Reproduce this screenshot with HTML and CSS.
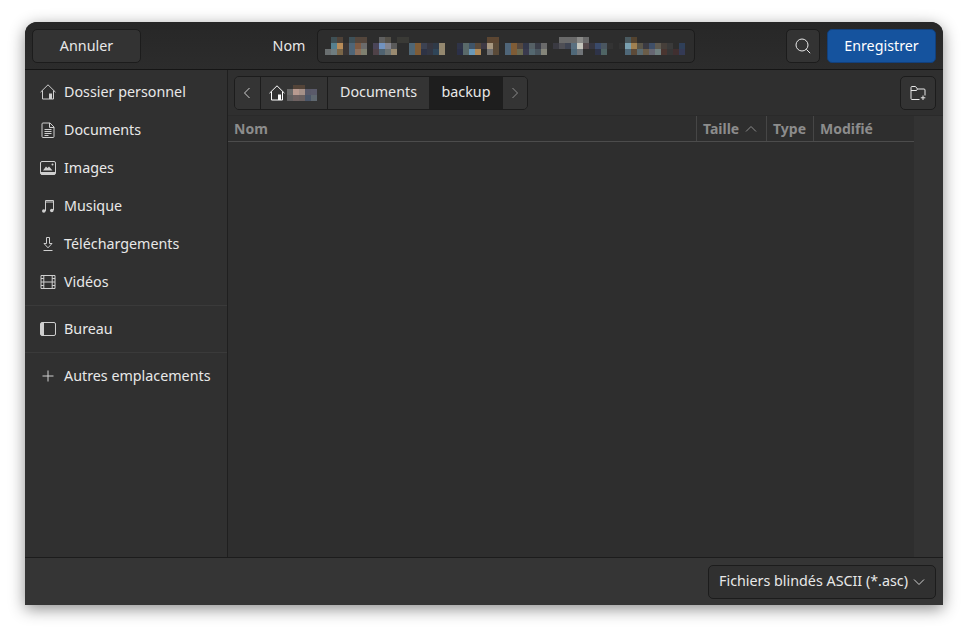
FILE: index.html
```html
<!DOCTYPE html>
<html>
<head>
    <title>Enregistrer</title>
    <link rel="stylesheet" href="styles.css">
</head>
<body>
    <section class="window">
        <header class="topbar">
            <div class="topbar-left">
                <button class="btn btn-cancel"><span class="lift-small">Annuler</span></button>
            </div>
            <div class="name-group">
                <label class="name-label lift-small">Nom</label>
                <div class="name-entry">
                    <svg class="mosaic" width="360" height="18" viewBox="324 36 360 18" shape-rendering="crispEdges">
                        <rect x="324" y="48" width="6" height="6" fill="#6a6f70"/>
                        <rect x="330" y="36" width="6" height="6" fill="#3f5055"/>
                        <rect x="330" y="42" width="6" height="6" fill="#56808f"/>
                        <rect x="330" y="48" width="6" height="6" fill="#6f7d80"/>
                        <rect x="336" y="36" width="6" height="6" fill="#4f4238"/>
                        <rect x="336" y="42" width="6" height="6" fill="#b98c58"/>
                        <rect x="336" y="48" width="6" height="6" fill="#7a6648"/>
                        <rect x="342" y="42" width="6" height="12" fill="#3a3535"/>
                        <rect x="348" y="36" width="6" height="6" fill="#3e5058"/>
                        <rect x="348" y="42" width="6" height="12" fill="#4f6577"/>
                        <rect x="354" y="36" width="6" height="6" fill="#54463c"/>
                        <rect x="354" y="42" width="6" height="6" fill="#7f5a42"/>
                        <rect x="354" y="48" width="6" height="6" fill="#8c6f5c"/>
                        <rect x="360" y="36" width="6" height="6" fill="#54463c"/>
                        <rect x="360" y="42" width="6" height="6" fill="#6b6b6b"/>
                        <rect x="360" y="48" width="6" height="6" fill="#7f8070"/>
                        <rect x="372" y="42" width="6" height="6" fill="#4a4558"/>
                        <rect x="372" y="48" width="6" height="6" fill="#4f4248"/>
                        <rect x="378" y="36" width="6" height="6" fill="#5f5f5f"/>
                        <rect x="378" y="42" width="6" height="6" fill="#7293c0"/>
                        <rect x="378" y="48" width="6" height="6" fill="#4f6270"/>
                        <rect x="384" y="36" width="6" height="6" fill="#545048"/>
                        <rect x="384" y="42" width="6" height="6" fill="#85858f"/>
                        <rect x="384" y="48" width="6" height="6" fill="#6c7272"/>
                        <rect x="390" y="42" width="6" height="6" fill="#5a5a5a"/>
                        <rect x="390" y="48" width="6" height="6" fill="#9a8a70"/>
                        <rect x="396" y="36" width="12" height="6" fill="#3a3a36"/>
                        <rect x="408" y="42" width="6" height="12" fill="#4f6675"/>
                        <rect x="414" y="42" width="6" height="12" fill="#7f5c36"/>
                        <rect x="420" y="42" width="6" height="6" fill="#3c4252"/>
                        <rect x="420" y="48" width="6" height="6" fill="#2e3345"/>
                        <rect x="426" y="42" width="6" height="6" fill="#363640"/>
                        <rect x="426" y="48" width="6" height="6" fill="#333744"/>
                        <rect x="432" y="42" width="6" height="6" fill="#2f3a48"/>
                        <rect x="432" y="48" width="6" height="6" fill="#2f4558"/>
                        <rect x="438" y="42" width="6" height="12" fill="#94886f"/>
                        <rect x="456" y="42" width="6" height="6" fill="#2f3448"/>
                        <rect x="456" y="48" width="6" height="6" fill="#2b3048"/>
                        <rect x="462" y="42" width="6" height="12" fill="#5a6a6a"/>
                        <rect x="468" y="42" width="6" height="6" fill="#3f5468"/>
                        <rect x="468" y="48" width="6" height="6" fill="#6a98b8"/>
                        <rect x="474" y="42" width="6" height="6" fill="#5a4a3a"/>
                        <rect x="474" y="48" width="6" height="6" fill="#b08a58"/>
                        <rect x="480" y="42" width="6" height="6" fill="#3f3a45"/>
                        <rect x="486" y="36" width="6" height="6" fill="#5c4632"/>
                        <rect x="486" y="42" width="6" height="6" fill="#a89880"/>
                        <rect x="486" y="48" width="6" height="6" fill="#707070"/>
                        <rect x="492" y="36" width="6" height="6" fill="#5c4632"/>
                        <rect x="492" y="42" width="6" height="12" fill="#5a4a38"/>
                        <rect x="504" y="42" width="6" height="12" fill="#4f6578"/>
                        <rect x="510" y="42" width="6" height="12" fill="#7f5c36"/>
                        <rect x="516" y="42" width="6" height="6" fill="#55483f"/>
                        <rect x="516" y="48" width="6" height="6" fill="#6a6a52"/>
                        <rect x="522" y="42" width="6" height="6" fill="#33384a"/>
                        <rect x="522" y="48" width="6" height="6" fill="#3a3a4e"/>
                        <rect x="528" y="42" width="6" height="6" fill="#556065"/>
                        <rect x="528" y="48" width="6" height="6" fill="#556870"/>
                        <rect x="534" y="42" width="6" height="6" fill="#3a3d48"/>
                        <rect x="534" y="48" width="6" height="6" fill="#4a555e"/>
                        <rect x="540" y="42" width="6" height="6" fill="#6a6a6a"/>
                        <rect x="540" y="48" width="6" height="6" fill="#85857a"/>
                        <rect x="552" y="42" width="6" height="6" fill="#3a3a42"/>
                        <rect x="558" y="36" width="6" height="6" fill="#6a6a6a"/>
                        <rect x="558" y="42" width="6" height="6" fill="#4f4f55"/>
                        <rect x="564" y="36" width="6" height="6" fill="#6a6a6a"/>
                        <rect x="564" y="42" width="6" height="6" fill="#3f4452"/>
                        <rect x="570" y="36" width="6" height="6" fill="#6a6a6a"/>
                        <rect x="570" y="42" width="6" height="6" fill="#5a7080"/>
                        <rect x="570" y="48" width="6" height="6" fill="#4f6878"/>
                        <rect x="576" y="36" width="6" height="6" fill="#8a8a88"/>
                        <rect x="576" y="42" width="6" height="6" fill="#c5c5bc"/>
                        <rect x="576" y="48" width="6" height="6" fill="#707478"/>
                        <rect x="582" y="36" width="6" height="6" fill="#6a6a6a"/>
                        <rect x="582" y="42" width="6" height="6" fill="#54484a"/>
                        <rect x="588" y="42" width="6" height="6" fill="#363640"/>
                        <rect x="594" y="42" width="6" height="6" fill="#3a4a6a"/>
                        <rect x="594" y="48" width="6" height="6" fill="#2e3348"/>
                        <rect x="600" y="42" width="6" height="6" fill="#4a5660"/>
                        <rect x="600" y="48" width="6" height="6" fill="#4f6464"/>
                        <rect x="606" y="42" width="6" height="6" fill="#333333"/>
                        <rect x="618" y="42" width="6" height="6" fill="#333333"/>
                        <rect x="624" y="36" width="6" height="6" fill="#4a5a60"/>
                        <rect x="624" y="42" width="6" height="6" fill="#7aa0b0"/>
                        <rect x="624" y="48" width="6" height="6" fill="#4f6878"/>
                        <rect x="630" y="36" width="6" height="6" fill="#54432f"/>
                        <rect x="630" y="42" width="6" height="6" fill="#a08050"/>
                        <rect x="630" y="48" width="6" height="6" fill="#5c4a38"/>
                        <rect x="636" y="42" width="6" height="6" fill="#5a5548"/>
                        <rect x="636" y="48" width="6" height="6" fill="#5a6a70"/>
                        <rect x="642" y="42" width="6" height="6" fill="#3a3a42"/>
                        <rect x="642" y="48" width="6" height="6" fill="#6a5c48"/>
                        <rect x="648" y="42" width="6" height="6" fill="#3f4f68"/>
                        <rect x="648" y="48" width="6" height="6" fill="#666672"/>
                        <rect x="654" y="42" width="6" height="6" fill="#5f5a50"/>
                        <rect x="654" y="48" width="6" height="6" fill="#708080"/>
                        <rect x="660" y="42" width="6" height="6" fill="#463f3a"/>
                        <rect x="660" y="48" width="6" height="6" fill="#4a3530"/>
                        <rect x="666" y="42" width="6" height="6" fill="#3a3a3a"/>
                        <rect x="666" y="48" width="6" height="6" fill="#363636"/>
                        <rect x="672" y="48" width="6" height="6" fill="#402f30"/>
                        <rect x="678" y="42" width="6" height="6" fill="#2f3f58"/>
                        <rect x="678" y="48" width="6" height="6" fill="#343a55"/>
                    </svg>
                </div>
            </div>
            <div class="topbar-right">
                <button class="btn btn-search">
                    <svg class="icon icon-bright" viewBox="0 0 16 16"><circle cx="7" cy="7" r="6"/><path d="M11.300 11.300l3.900 3.900"/></svg>
                </button>
                <button class="btn btn-save"><span class="lift-small">Enregistrer</span></button>
            </div>
        </header>

        <div class="main">
            <nav class="sidebar">
                <div class="place">
                    <svg class="icon" viewBox="0 0 16 16"><path d="M.5 8.200L8 .8l7.500 7.400M2.500 6.500v8.500h11V6.500"/><path class="solid" d="M9 9.500h3v5.500H9z"/></svg>
                    <span class="lift">Dossier personnel</span>
                </div>
                <div class="place">
                    <svg class="icon" viewBox="0 0 16 16"><path d="M2 2a1 1 0 0 1 1-1h7l4 4v9.500a1 1 0 0 1-1 1H3a1 1 0 0 1-1-1z"/><path d="M9.500 1v4.500H14M4.500 7.500h7M4.500 9.500h7M4.500 11.500h7M4.500 13.500h4"/></svg>
                    <span class="lift">Documents</span>
                </div>
                <div class="place">
                    <svg class="icon" viewBox="0 0 16 16"><rect x=".5" y="1.500" width="15" height="13" rx="1.500"/><path class="solid" d="M1 12h14V14.500H1zM3 10.500l3-4 1.500 1.500L9 6.500l3.500 4z"/><circle class="solid" cx="12.500" cy="4.500" r="1"/></svg>
                    <span class="lift">Images</span>
                </div>
                <div class="place">
                    <svg class="icon" viewBox="0 0 16 16"><path d="M5.500 13V2.500h8V12"/><path d="M5.500 4h8"/><circle class="solid" cx="3.800" cy="13" r="1.800"/><circle class="solid" cx="11.800" cy="12.500" r="1.800"/></svg>
                    <span class="lift">Musique</span>
                </div>
                <div class="place">
                    <svg class="icon" viewBox="0 0 16 16"><path d="M6.500 1.500h3v6h2.500L8 11.800 4 7.500h2.500zM3.500 14.500h9"/></svg>
                    <span class="lift">Téléchargements</span>
                </div>
                <div class="place">
                    <svg class="icon" viewBox="0 0 16 16"><path d="M1 1.500h14v13H1zM3.800 1.500v13M12.200 1.500v13M3.800 8h8.400M1 4.500h2.800M1 8h2.800M1 11.500h2.800M12.200 4.500H15M12.200 8H15M12.200 11.500H15"/></svg>
                    <span class="lift">Vidéos</span>
                </div>
                <div class="separator"></div>
                <div class="place">
                    <svg class="icon" viewBox="0 0 16 16"><rect x=".5" y="1.500" width="15" height="13" rx="1.500"/><path class="solid" d="M1 2h3v12H1z"/></svg>
                    <span class="lift">Bureau</span>
                </div>
                <div class="separator"></div>
                <div class="place">
                    <svg class="icon" viewBox="0 0 16 16"><path d="M8 2.500v11M2.500 8h11"/></svg>
                    <span class="lift">Autres emplacements</span>
                </div>
            </nav>

            <section class="browser">
                <div class="pathrow">
                    <div class="pathbar">
                        <div class="crumb crumb-back">
                            <svg class="chev" viewBox="0 0 16 16"><path d="M9.500 3L4.500 8l5 5"/></svg>
                        </div>
                        <div class="crumb crumb-home">
                            <svg class="icon icon-home" viewBox="0 0 16 16"><path d="M.5 8.200L8 .8l7.500 7.400M2.500 6.500v8.500h11V6.500"/><path class="solid" d="M9 9.500h3v5.500H9z"/></svg>
                            <svg class="mosaic-home" width="30" height="16" viewBox="287 86 30 16" shape-rendering="crispEdges">
                                <rect x="287" y="90" width="6" height="6" fill="#6a6a6a"/>
                                <rect x="287" y="96" width="6" height="6" fill="#605f60"/>
                                <rect x="293" y="86" width="12" height="4" fill="#544438"/>
                                <rect x="293" y="90" width="6" height="6" fill="#b89a90"/>
                                <rect x="293" y="96" width="6" height="6" fill="#6f6262"/>
                                <rect x="299" y="90" width="6" height="6" fill="#a59088"/>
                                <rect x="299" y="96" width="6" height="6" fill="#6a6060"/>
                                <rect x="305" y="90" width="6" height="6" fill="#585868"/>
                                <rect x="305" y="96" width="6" height="6" fill="#4a5568"/>
                                <rect x="311" y="90" width="6" height="6" fill="#5a5a6a"/>
                                <rect x="311" y="96" width="6" height="6" fill="#5f6870"/>
                            </svg>
                        </div>
                        <div class="crumb crumb-docs"><span class="lift">Documents</span></div>
                        <div class="crumb crumb-current"><span class="lift">backup</span></div>
                        <div class="crumb crumb-next">
                            <svg class="chev chev-dim" viewBox="0 0 16 16"><path d="M5.500 3l5 5-5 5"/></svg>
                        </div>
                    </div>
                    <button class="btn btn-newfolder">
                        <svg class="icon icon-bright" viewBox="0 0 16 16"><path d="M9.500 14.500H2a1 1 0 0 1-1-1v-11a1 1 0 0 1 1-1h3.500l2 2.500H14a1 1 0 0 1 1 1v5.500M1 5.500h5.500l1-1.500M13 10.500v4.500M10.800 12.800h4.500"/></svg>
                    </button>
                </div>
                <div class="content">
                    <div class="list">
                        <div class="columns">
                            <div class="col col-name">Nom</div>
                            <div class="col col-size">Taille
                                <svg class="sort" viewBox="0 0 12 8"><path d="M1 6.500l5-5 5 5"/></svg>
                            </div>
                            <div class="col col-type">Type</div>
                            <div class="col col-date">Modifié</div>
                        </div>
                    </div>
                    <div class="strip"></div>
                </div>
            </section>
        </div>

        <footer class="bottombar">
            <button class="btn btn-filter"><span class="lift">Fichiers blindés ASCII (*.asc)</span>
                <svg class="sort sort-down" viewBox="0 0 12 8"><path d="M1 1.500l5 5 5-5"/></svg>
            </button>
        </footer>
    </section>
</body>
</html>
```

FILE: styles.css
```css
* {
    box-sizing: border-box;
}
html, body {
    height: 100%;
}
body {
    margin: 0;
    padding: 22px 25px 28px;
    background: #fff;
    font-family: "Noto Sans", sans-serif;
    font-size: 14.3px;
    color: #e8e8e8;
}
.window {
    display: flex;
    flex-direction: column;
    width: 918px;
    height: 583px;
    border-radius: 12px 12px 0 0;
    background: #303030;
    box-shadow: 0 4px 16px rgba(0, 0, 0, 0.45);
    overflow: hidden;
}

/* noto sits a bit lower than the ui font */
.lift {
    margin-bottom: 2px;
}
.lift-small {
    margin-bottom: 1px;
}

.btn {
    display: flex;
    align-items: center;
    justify-content: center;
    height: 34px;
    padding: 0;
    border: 1px solid #1c1c1c;
    border-radius: 5px;
    background: #333;
    color: #e8e8e8;
    font: inherit;
}

/* header */
.topbar {
    display: grid;
    grid-template-columns: 1fr auto 1fr;
    align-items: center;
    flex: none;
    height: 48px;
    padding: 0 7px;
    border-bottom: 1px solid #151515;
    background: linear-gradient(#272727, #2c2c2c);
}
.topbar-left {
    display: flex;
}
.topbar-right {
    display: flex;
    justify-content: flex-end;
    gap: 7px;
}
.btn-cancel {
    width: 109px;
}
.name-group {
    display: flex;
    align-items: center;
    gap: 12px;
}
.name-entry {
    display: flex;
    align-items: center;
    width: 378px;
    height: 34px;
    padding-left: 7px;
    border: 1px solid #1c1c1c;
    border-radius: 5px;
    background: #2d2d2d;
}
.mosaic {
    display: block;
    flex: none;
}
.btn-search {
    width: 34px;
}
.btn-save {
    width: 109px;
    border-color: #12407c;
    background: #15539e;
    color: #fff;
}

/* sidebar */
.main {
    display: flex;
    flex: 1;
    min-height: 0;
}
.sidebar {
    flex: none;
    width: 203px;
    padding-top: 3px;
    border-right: 1px solid #1f1f1f;
    background: #303030;
}
.place {
    display: flex;
    align-items: center;
    gap: 8px;
    height: 38px;
    padding-left: 15px;
}
.separator {
    height: 1px;
    margin: 4px 0;
    background: #3a3a3a;
}
.icon {
    flex: none;
    width: 16px;
    height: 16px;
    fill: none;
    stroke: #cfcfcf;
    stroke-width: 1;
}
.icon .solid {
    fill: #cfcfcf;
    stroke: none;
}
.icon-bright {
    stroke: #e8e8e8;
}

/* file browser */
.browser {
    display: flex;
    flex: 1;
    flex-direction: column;
    min-width: 0;
    background: #2f2f2f;
}
.pathrow {
    display: flex;
    align-items: center;
    justify-content: space-between;
    flex: none;
    height: 46px;
    padding: 0 7px 0 6px;
    border-bottom: 1px solid #2a2a2a;
}
.pathbar {
    display: flex;
    height: 34px;
    border: 1px solid #1c1c1c;
    border-radius: 5px;
    overflow: hidden;
}
.crumb {
    display: flex;
    align-items: center;
    justify-content: center;
    background: #343434;
    border-right: 1px solid #1c1c1c;
}
.crumb-back {
    width: 26px;
}
.crumb-home {
    justify-content: flex-start;
    width: 67px;
    padding-left: 8px;
}
.icon-home {
    stroke: #fff;
}
.icon-home .solid {
    fill: #fff;
}
.mosaic-home {
    display: block;
    flex: none;
    margin-left: 2px;
}
.crumb-docs {
    width: 101px;
    border-right: 0;
}
.crumb-current {
    width: 74px;
    border-right: 0;
    background: #1e1e1e;
}
.crumb-next {
    width: 24px;
    border-right: 0;
}
.chev {
    width: 16px;
    height: 16px;
    fill: none;
    stroke: #d0d0d0;
    stroke-width: 1;
}
.chev-dim {
    stroke: #8c8c8c;
}
.btn-newfolder {
    width: 36px;
}
.content {
    display: flex;
    flex: 1;
    min-height: 0;
}
.list {
    flex: 1;
    background: #2e2e2e;
}
.strip {
    flex: none;
    width: 29px;
    background: #333;
}
.columns {
    display: flex;
    height: 26px;
    border-bottom: 1px solid #4c4c4c;
    color: #8c8c8c;
    font-size: 14px;
    font-weight: 700;
}
.col {
    display: flex;
    align-items: center;
    height: 25px;
    padding-left: 6px;
    border-right: 1px solid #464646;
}
.col-name {
    width: 469px;
}
.col-size {
    gap: 6px;
    width: 70px;
}
.col-type {
    width: 47px;
}
.col-date {
    flex: 1;
    border-right: 0;
}
.sort {
    width: 12px;
    height: 8px;
    fill: none;
    stroke: #8c8c8c;
    stroke-width: 1;
}

/* bottom */
.bottombar {
    display: flex;
    align-items: center;
    justify-content: flex-end;
    flex: none;
    height: 48px;
    padding: 0 7px;
    border-top: 1px solid #1c1c1c;
    background: #353535;
}
.btn-filter {
    gap: 5px;
    width: 228px;
    background: #303030;
}
.sort-down {
    stroke: #d0d0d0;
}
```
